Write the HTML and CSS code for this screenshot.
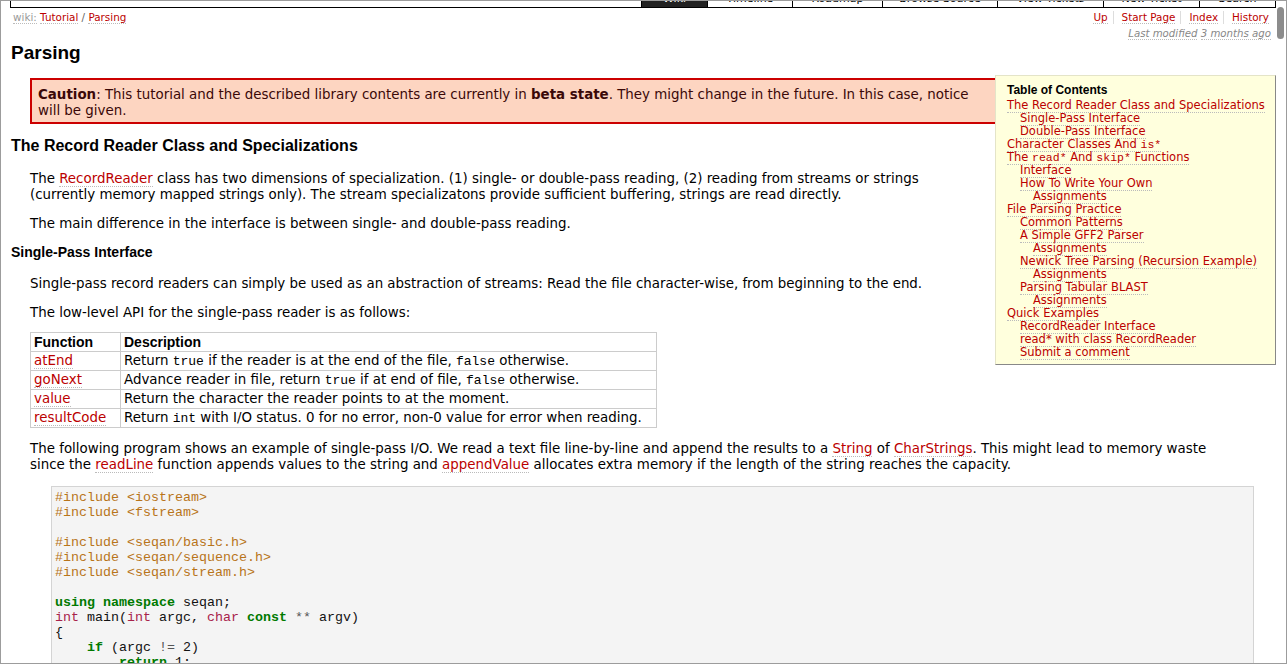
FILE: index.html
```html
<!DOCTYPE html>
<html>
<head>
<meta charset="utf-8">
<title>Parsing</title>
<link rel="stylesheet" href="styles.css">
</head>
<body>
<div class="window">
  <div class="mainnav">
    <ul class="tabs">
      <li class="tab tab-wiki active">Wiki</li>
      <li class="tab tab-timeline">Timeline</li>
      <li class="tab tab-roadmap">Roadmap</li>
      <li class="tab tab-browse">Browse Source</li>
      <li class="tab tab-view">View Tickets</li>
      <li class="tab tab-new">New Ticket</li>
      <li class="tab tab-search">Search</li>
    </ul>
  </div>

  <div class="ctxbar">
    <div class="crumbs"><span class="wikilabel">wiki:</span> <a class="lnk" href="#">Tutorial</a> / <a class="lnk" href="#">Parsing</a></div>
    <ul class="ctxnav">
      <li><a class="lnk" href="#">Up</a></li>
      <li><a class="lnk" href="#">Start Page</a></li>
      <li><a class="lnk" href="#">Index</a></li>
      <li><a class="lnk" href="#">History</a></li>
    </ul>
  </div>
  <div class="lastmod"><span class="dot">Last modified</span> <span class="dot">3 months ago</span></div>

  <div class="content">
    <h1 class="title">Parsing</h1>

    <div class="toc">
      <h4 class="toc-title">Table of Contents</h4>
      <ol class="toc-list">
        <li class="l1"><a class="lnk" href="#">The Record Reader Class and Specializations</a></li>
        <li class="l2"><a class="lnk" href="#">Single-Pass Interface</a></li>
        <li class="l2"><a class="lnk" href="#">Double-Pass Interface</a></li>
        <li class="l1"><a class="lnk" href="#">Character Classes And <code class="tt">is*</code></a></li>
        <li class="l1"><a class="lnk" href="#">The <code class="tt">read*</code> And <code class="tt">skip*</code> Functions</a></li>
        <li class="l2"><a class="lnk" href="#">Interface</a></li>
        <li class="l2"><a class="lnk" href="#">How To Write Your Own</a></li>
        <li class="l3"><a class="lnk" href="#">Assignments</a></li>
        <li class="l1"><a class="lnk" href="#">File Parsing Practice</a></li>
        <li class="l2"><a class="lnk" href="#">Common Patterns</a></li>
        <li class="l2"><a class="lnk" href="#">A Simple GFF2 Parser</a></li>
        <li class="l3"><a class="lnk" href="#">Assignments</a></li>
        <li class="l2"><a class="lnk" href="#">Newick Tree Parsing (Recursion Example)</a></li>
        <li class="l3"><a class="lnk" href="#">Assignments</a></li>
        <li class="l2"><a class="lnk" href="#">Parsing Tabular BLAST</a></li>
        <li class="l3"><a class="lnk" href="#">Assignments</a></li>
        <li class="l1"><a class="lnk" href="#">Quick Examples</a></li>
        <li class="l2"><a class="lnk" href="#">RecordReader Interface</a></li>
        <li class="l2"><a class="lnk" href="#">read* with class RecordReader</a></li>
        <li class="l2"><a class="lnk" href="#">Submit a comment</a></li>
      </ol>
    </div>

    <div class="caution"><strong>Caution</strong>: This tutorial and the described library contents are currently in <strong>beta state</strong>. They might change in the future. In this case, notice will be given.</div>

    <h2 class="h2">The Record Reader Class and Specializations</h2>
    <div class="section">
      <p class="para">The <a class="lnk" href="#">RecordReader</a> class has two dimensions of specialization. (1) single- or double-pass reading, (2) reading from streams or strings (currently memory mapped strings only). The stream specializatons provide sufficient buffering, strings are read directly.</p>
      <p class="para">The main difference in the interface is between single- and double-pass reading.</p>
    </div>

    <h3 class="h3">Single-Pass Interface</h3>
    <div class="section">
      <p class="para">Single-pass record readers can simply be used as an abstraction of streams: Read the file character-wise, from beginning to the end.</p>
      <p class="para">The low-level API for the single-pass reader is as follows:</p>
      <table class="api">
        <tr><th class="c1">Function</th><th>Description</th></tr>
        <tr><td class="c1"><a class="lnk" href="#">atEnd</a></td><td>Return <code class="tt">true</code> if the reader is at the end of the file, <code class="tt">false</code> otherwise.</td></tr>
        <tr><td class="c1"><a class="lnk" href="#">goNext</a></td><td>Advance reader in file, return <code class="tt">true</code> if at end of file, <code class="tt">false</code> otherwise.</td></tr>
        <tr><td class="c1"><a class="lnk" href="#">value</a></td><td>Return the character the reader points to at the moment.</td></tr>
        <tr><td class="c1"><a class="lnk" href="#">resultCode</a></td><td>Return <code class="tt">int</code> with I/O status. 0 for no error, non-0 value for error when reading.</td></tr>
      </table>
      <p class="para">The following program shows an example of single-pass I/O. We read a text file line-by-line and append the results to a <a class="lnk" href="#">String</a> of <a class="lnk" href="#">CharStrings</a>. This might lead to memory waste since the <a class="lnk" href="#">readLine</a> function appends values to the string and <a class="lnk" href="#">appendValue</a> allocates extra memory if the length of the string reaches the capacity.</p>
      <pre class="code"><span class="cp">#include &lt;iostream&gt;</span>
<span class="cp">#include &lt;fstream&gt;</span>

<span class="cp">#include &lt;seqan/basic.h&gt;</span>
<span class="cp">#include &lt;seqan/sequence.h&gt;</span>
<span class="cp">#include &lt;seqan/stream.h&gt;</span>

<span class="k">using</span> <span class="k">namespace</span> seqan;
<span class="kt">int</span> main(<span class="kt">int</span> argc, <span class="kt">char</span> <span class="k">const</span> <span class="o">**</span> argv)
{
    <span class="k">if</span> (argc <span class="o">!=</span> 2)
        <span class="k">return</span> 1;

    std::fstream in(argv[1], std::ios::binary | std::ios::in);
</pre>
    </div>
  </div>

  <div class="scrollthumb"></div>
</div>
</body>
</html>
```

FILE: styles.css
```css
html, body {
  margin: 0;
  padding: 0;
  background: #fff;
}

.window {
  position: relative;
  box-sizing: border-box;
  height: 664px;
  overflow: hidden;
  border: 1px solid #9c9c9c;
  font-family: "DejaVu Sans", Verdana, sans-serif;
  font-size: 13.4px;
  color: #000;
}

/* main navigation (scrolled mostly out of view) */
.mainnav {
  margin: -14px 10px 0 9px;
  border: 1px solid #000;
  border-top: 0;
  height: 20px;
  overflow: hidden;
}
.tabs {
  list-style: none;
  margin: 0;
  padding: 0;
  display: flex;
  justify-content: flex-end;
  height: 20px;
  font-family: "DejaVu Sans", Verdana, sans-serif;
  font-size: 11px;
}
.tab {
  border-left: 1px solid #000;
  text-align: center;
  line-height: 23px;
  height: 20px;
  overflow: hidden;
  color: #000;
  box-sizing: border-box;
}
.tab.active {
  background: #222;
  color: #fff;
}
.tab-wiki { width: 66px; }
.tab-timeline { width: 85px; }
.tab-roadmap { width: 90px; }
.tab-browse { width: 115px; }
.tab-view { width: 106px; }
.tab-new { width: 96px; }
.tab-search { width: 76px; }

/* links */
.lnk {
  color: #b00;
  text-decoration: none;
  border-bottom: 1px dotted #bbb;
}
.dot {
  border-bottom: 1px dotted #bbb;
}

/* context bar */
.ctxbar {
  display: flex;
  justify-content: space-between;
  align-items: center;
  padding: 3px 17px 0 12px;
  font-size: 10.4px;
  line-height: 13px;
}
.wikilabel {
  color: #999;
  border-bottom: 1px dotted #bbb;
}
.crumbs {
  color: #666;
}
.ctxnav {
  list-style: none;
  margin: 0;
  padding: 0;
  display: flex;
}
.ctxnav li {
  padding: 0 5px 0 8px;
  border-left: 1px solid #ddd;
}
.ctxnav li:first-child {
  border-left: 0;
}
.ctxnav li:last-child {
  padding-right: 0;
}
.lastmod {
  text-align: right;
  padding: 3px 15px 0 0;
  font-size: 10.2px;
  line-height: 13px;
  font-style: italic;
  color: #888;
}

/* content */
.content {
  padding: 0 10px;
}
.title {
  margin: 2px 0 0 0;
  font-family: "Liberation Sans", Arial, sans-serif;
  font-size: 19px;
  line-height: 22px;
  font-weight: bold;
}

.toc {
  float: right;
  width: 257px;
  margin: 11px 0 10px 24px;
  padding: 7px 11px 5px 11px;
  background: #ffd;
  border: 1px solid;
  border-color: #e4e4c8 #888 #888 #e4e4c8;
  white-space: nowrap;
  font-size: 11.5px;
  line-height: 13px;
}
.toc-title {
  margin: 0 0 1px 0;
  font-family: "Liberation Sans", Arial, sans-serif;
  font-size: 12px;
  line-height: 15px;
  font-weight: bold;
}
.toc-list {
  list-style: none;
  margin: 0;
  padding: 0;
}
.toc-list .l2 { padding-left: 13px; }
.toc-list .l3 { padding-left: 26px; }

.tt {
  font-family: "Liberation Mono", "Courier New", monospace;
  font-size: 13px;
  line-height: 1;
}
.toc .tt {
  font-size: 11.5px;
}

.caution {
  margin: 14px 0 0 19px;
  padding: 7px 6px 3px 6px;
  border: 2px solid #c00;
  background: #fdd5c1;
  color: #3a0808;
  line-height: 16px;
}

.h2 {
  margin: 12px 0 15px 0;
  font-family: "Liberation Sans", Arial, sans-serif;
  font-size: 16px;
  line-height: 20px;
  font-weight: bold;
}
.h3 {
  margin: 11px 0 15px 0;
  font-family: "Liberation Sans", Arial, sans-serif;
  font-size: 14px;
  line-height: 18px;
  font-weight: bold;
}
.section {
  margin-left: 19px;
}
.para {
  margin: 13px 50px 0 0;
  line-height: 16px;
}
.section > .para:first-child {
  margin-top: 0;
}

.api {
  margin-top: 11px;
  width: 627px;
  border-collapse: collapse;
  border: 1px solid #ccc;
}
.api th, .api td {
  height: 19px;
  box-sizing: border-box;
  border: 1px solid #ccc;
  padding: 0 3px;
  line-height: 16px;
  text-align: left;
  vertical-align: middle;
}
.api th {
  font-family: "Liberation Sans", Arial, sans-serif;
  font-size: 14px;
  font-weight: bold;
}
.api .c1 {
  width: 90px;
}

.code {
  margin: 13px 22px 0 21px;
  padding: 3px 3px;
  background: #f4f4f4;
  border: 1px solid #d4d4d4;
  font-family: "Liberation Mono", "Courier New", monospace;
  font-size: 13.33px;
  line-height: 15px;
  color: #111;
}
.cp { color: #b8741a; }
.k { color: #007a00; font-weight: bold; }
.kt { color: #a8224a; }
.o { color: #555; }

.scrollthumb {
  position: absolute;
  top: 6px;
  right: 2px;
  width: 7px;
  height: 32px;
  border-radius: 4px;
  background: #8c8c8c;
}
```
